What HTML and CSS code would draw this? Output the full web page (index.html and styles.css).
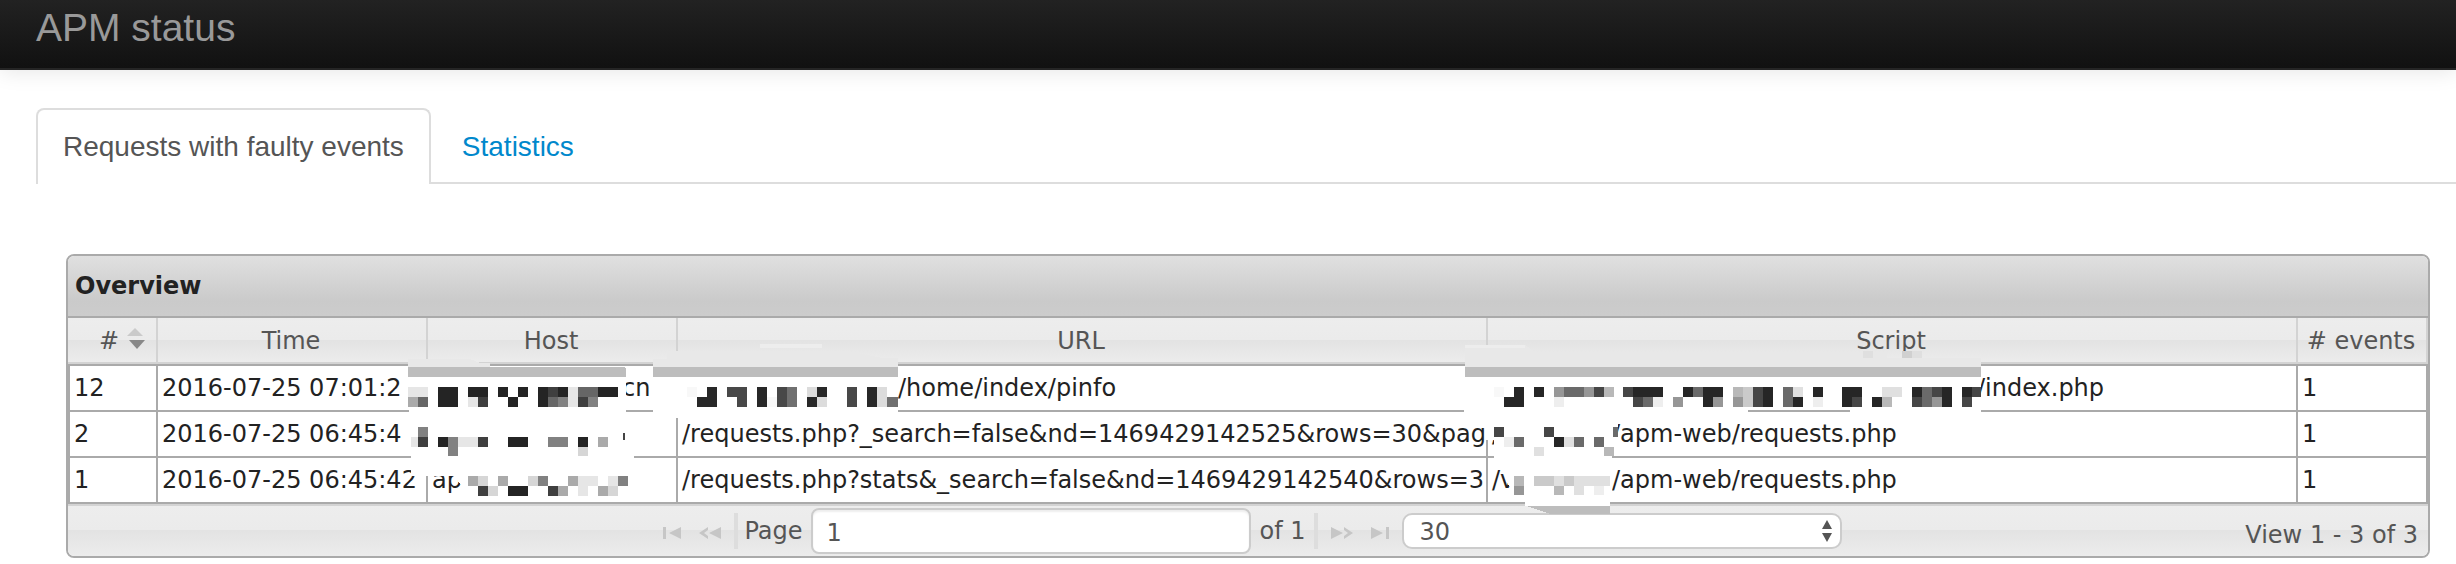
FILE: index.html
```html
<!DOCTYPE html>
<html lang="en">
<head>
<meta charset="utf-8">
<title>APM status</title>
<link rel="stylesheet" href="styles.css">
</head>
<body>
<header class="navbar"><h1 class="brand">APM status</h1></header>
<nav class="tabs">
  <a class="tab tab-active" href="#requests">Requests with faulty events</a>
  <a class="tab" href="#statistics">Statistics</a>
</nav>
<main class="grid" id="requests">
  <h2 class="grid-title">Overview</h2>
  <table class="grid-table">
    <colgroup>
      <col class="col-id"><col class="col-time"><col class="col-host"><col><col><col class="col-events">
    </colgroup>
    <thead>
      <tr>
        <th scope="col"><span class="sort">#
          <svg class="sort-icon" width="18" height="22" viewBox="0 0 18 22" aria-hidden="true"><path fill="#cacaca" d="M8 0l8 8H0z"/><path fill="#888" d="M2 12h16l-8 9z"/></svg></span></th>
        <th scope="col">Time</th>
        <th scope="col">Host</th>
        <th scope="col">URL</th>
        <th scope="col">Script</th>
        <th scope="col"># events</th>
      </tr>
    </thead>
    <tbody>
      <tr>
        <td>12</td>
        <td>2016-07-25 07:01:2</td>
        <td><span class="masked masked-host"></span>cn</td>
        <td><span class="masked masked-url"></span>/home/index/pinfo</td>
        <td><span class="masked masked-script"></span>/index.php</td>
        <td>1</td>
      </tr>
      <tr>
        <td>2</td>
        <td>2016-07-25 06:45:4</td>
        <td></td>
        <td>/requests.php?_search=false&amp;nd=1469429142525&amp;rows=30&amp;pag</td>
        <td><span class="masked masked-dir">/</span>/apm-web/requests.php</td>
        <td>1</td>
      </tr>
      <tr>
        <td>1</td>
        <td>2016-07-25 06:45:42</td>
        <td>ap</td>
        <td>/requests.php?stats&amp;_search=false&amp;nd=1469429142540&amp;rows=3</td>
        <td><span class="masked masked-dir">/v</span>/apm-web/requests.php</td>
        <td>1</td>
      </tr>
    </tbody>
  </table>
  <footer class="pager">
    <div class="pager-center">
      <button class="pager-button" type="button" aria-label="First page"><svg width="18" height="12" viewBox="0 0 18 12"><path fill="#c6c6c6" d="M0 0h3v12H0zM18 0v12L6 6z"/></svg></button>
      <button class="pager-button" type="button" aria-label="Previous page"><svg width="22" height="12" viewBox="0 0 22 12"><path fill="#c6c6c6" d="M22 0v12L10 6zM9 0v3L5 6l4 3v3L0 6z"/></svg></button>
      <span class="separator"></span>
      <label class="page-label" for="page">Page</label>
      <input class="page-input" id="page" type="text" value="1">
      <span class="page-total">of 1</span>
      <span class="separator"></span>
      <button class="pager-button" type="button" aria-label="Next page"><svg width="22" height="12" viewBox="0 0 22 12"><path fill="#c6c6c6" d="M0 0v12l12-6zM13 0v3l4 3-4 3v3l9-6z"/></svg></button>
      <button class="pager-button" type="button" aria-label="Last page"><svg width="18" height="12" viewBox="0 0 18 12"><path fill="#c6c6c6" d="M0 0v12l12-6zM15 0h3v12h-3z"/></svg></button>
      <span class="select-wrap">
        <select class="rows-select" aria-label="Rows per page"><option>30</option></select>
        <svg class="select-arrows" width="12" height="22" viewBox="0 0 12 22" aria-hidden="true"><path fill="#555" d="M6 0l5 9H1zM1 13h10l-5 9z"/></svg>
      </span>
    </div>
    <span class="pager-info">View 1 - 3 of 3</span>
  </footer>
  <svg class="mosaic" width="2364" height="304" viewBox="66 254 2364 304" shape-rendering="crispEdges" aria-hidden="true">
    <!-- smeared header strips -->
    <path fill="#e8e8e8" d="M408 359h62l10 4h10v4h-82zM667 351h180l35 7h16v9H653v-8h14zM1465 345h60l10 7h352v6h94v9h-516z"/>
    <path fill="#ededed" d="M760 344h62v4h-62zM1465 345h60v3h-60z"/>
    <path fill="#bdbdbd" d="M408 367h216l2 2v8H408zM653 367h245v10H653zM1465 367h516v10h-516z"/>
    <path fill="#d0d0d0" d="M1902 351h10v7h-10z"/><path fill="#dfdfdf" d="M1912 351h10v7h-10zM1863 351h10v7h-10z"/>
    <!-- blanked areas -->
    <path fill="#fff" d="M409 377h217v50h8v49h-16v20H470l-8-10-8-10h-43v-49h-2zM653 377h245v41H653zM1465 377h516v35h-131v-1h-102v7h-130v38h-6v46h-2v4h-85v-4l-10-7-9-14v-23h-12v-18h-9v-24h-4v-2h-17z"/>
    <path fill="#bdbdbd" d="M1527 506h83v8h-60z"/>
    <path fill="#aaa" d="M1748 410h102v2h-102z"/>
    <path fill="#444" d="M623 433h2v7h-2z"/>
    <!-- host -->
    <path fill="#e6e6e6" d="M408 387h20v10h-20zM468 397h10v10h-10zM568 387h10v20h-10zM411 437h7v10h-7zM458 437h20v10h-20zM578 476h20v10h-20zM578 486h10v10h-10zM608 476h10v10h-10z"/>
    <path fill="#aaa" d="M408 397h10v10h-10zM598 437h10v10h-10zM468 476h10v10h-10zM498 476h10v10h-10zM568 476h10v10h-10zM558 486h10v10h-10zM598 486h10v10h-10z"/>
    <path fill="#666" d="M418 397h10v10h-10zM548 397h10v10h-10zM578 387h20v10h-20z"/>
    <path fill="#242424" d="M438 387h20v20h-20zM468 387h20v10h-20zM498 387h10v10h-10zM508 397h10v10h-10zM518 387h10v10h-10zM538 387h10v20h-10zM558 387h10v10h-10zM598 387h20v10h-20zM438 437h10v10h-10zM508 437h20v10h-20zM578 437h10v10h-10zM508 486h20v10h-20z"/>
    <path fill="#3f3f3f" d="M478 397h10v10h-10zM548 387h10v10h-10zM578 397h10v10h-10zM418 437h10v10h-10zM478 437h10v10h-10zM478 486h10v10h-10zM548 486h10v10h-10z"/>
    <path fill="#818181" d="M558 397h10v10h-10zM588 397h10v10h-10zM418 427h10v10h-10zM448 437h10v19h-10zM548 437h20v10h-20zM538 476h10v10h-10zM618 476h10v10h-10z"/>
    <path fill="#d6d6d6" d="M578 447h10v9h-10zM478 476h10v10h-10zM488 486h10v10h-10zM528 476h10v10h-10zM608 486h10v10h-10z"/>
    <!-- url -->
    <path fill="#f8f8f8" d="M687 387h10v10h-10zM767 397h10v10h-10zM1494 387h10v10h-10z"/>
    <path fill="#282828" d="M707 387h10v10h-10zM697 397h20v10h-20zM757 387h10v20h-10zM807 397h10v10h-10zM817 387h10v10h-10zM867 387h10v20h-10z"/>
    <path fill="#484848" d="M727 387h20v10h-20zM737 397h10v10h-10zM777 387h10v20h-10zM847 387h10v20h-10z"/>
    <path fill="#707070" d="M787 387h10v20h-10zM887 397h11v10h-11z"/>
    <path fill="#dcdcdc" d="M807 387h10v10h-10zM817 397h10v10h-10zM877 387h10v20h-10z"/>
    <!-- script -->
    <path fill="#262626" d="M1514 387h10v20h-10zM1504 397h10v10h-10zM1534 387h10v10h-10zM1633 387h30v10h-30zM1683 387h10v10h-10zM1703 387h20v10h-20zM1703 397h10v10h-10zM1763 387h10v20h-10zM1793 397h10v10h-10zM1813 387h10v10h-10zM1842 387h20v10h-20zM1842 397h10v10h-10zM1872 397h10v10h-10zM1912 387h10v10h-10zM1942 387h10v20h-10zM1962 387h10v10h-10zM1554 437h10v10h-10z"/>
    <path fill="#464646" d="M1594 387h10v10h-10zM1623 387h10v10h-10zM1633 397h10v10h-10zM1753 387h10v20h-10zM1852 397h10v10h-10zM1912 397h10v10h-10zM1932 387h10v10h-10zM1962 397h10v10h-10zM1972 387h9v10h-9zM1494 427h10v10h-10zM1544 427h10v10h-10z"/>
    <path fill="#6a6a6a" d="M1564 387h20v10h-20zM1643 397h10v10h-10zM1693 387h10v10h-10zM1783 387h10v10h-10zM1783 397h10v10h-10zM1922 387h10v20h-10zM1613 427h5v10h-5zM1514 437h10v10h-10zM1574 437h10v10h-10zM1594 437h10v10h-10z"/>
    <path fill="#969696" d="M1554 387h10v10h-10zM1584 387h10v10h-10zM1673 397h10v10h-10zM1713 397h10v10h-10zM1733 397h10v10h-10zM1932 397h10v10h-10zM1514 486h10v9h-10z"/>
    <path fill="#b8b8b8" d="M1604 387h10v10h-10zM1733 387h10v10h-10zM1882 397h10v10h-10zM1604 447h10v9h-10zM1514 476h10v10h-10zM1554 486h10v9h-10z"/>
    <path fill="#cacaca" d="M1743 387h10v20h-10zM1534 476h20v10h-20zM1564 476h10v10h-10z"/>
    <path fill="#e0e0e0" d="M1793 387h10v10h-10zM1882 387h20v10h-20zM1564 437h10v10h-10zM1534 447h10v9h-10zM1554 476h10v10h-10zM1574 476h36v10h-36zM1574 486h10v9h-10z"/>
    <path fill="#eee" d="M1554 397h10v10h-10zM1813 397h10v10h-10zM1504 437h10v10h-10zM1594 486h10v9h-10zM1653 397h10v10h-10z"/>
  </svg>
</main>
</body>
</html>
```
FILE: styles.css
```css
* { box-sizing: border-box; }
body {
  margin: 0;
  background: #fff;
  color: #222;
  font-family: Verdana, "DejaVu Sans", sans-serif;
  font-size: 24px;
}
.navbar {
  height: 70px;
  padding: 0 36px;
  border-bottom: 2px solid #252525;
  background: linear-gradient(#222, #111);
  box-shadow: 0 2px 20px rgba(0, 0, 0, 0.1);
}
.brand {
  margin: 0;
  color: #999;
  font: 39px/56px "Helvetica Neue", "Liberation Sans", sans-serif;
}
.tabs {
  display: flex;
  gap: 4px;
  margin-top: 38px;
  padding-left: 36px;
  font: 28px/36px "Helvetica Neue", "Liberation Sans", sans-serif;
  background: linear-gradient(#ddd, #ddd) 36px 100% / 100% 2px no-repeat;
}
.tab {
  padding: 19px 25px;
  border: 2px solid transparent;
  border-bottom: 0;
  border-radius: 8px 8px 0 0;
  color: #08c;
  text-decoration: none;
}
.tab-active {
  border-color: #ddd;
  background: #fff;
  color: #555;
}
.grid {
  position: relative;
  margin: 70px 26px 6px 66px;
  border: 2px solid #aaa;
  border-radius: 8px;
}
.grid-title {
  margin: 0;
  padding: 0 7px;
  border-bottom: 2px solid #aaa;
  border-radius: 6px 6px 0 0;
  background: linear-gradient(#e0e0e0, #cacaca 75%, #ccc);
  font-size: 24px;
  line-height: 60px;
}
.grid-table {
  width: 100%;
  table-layout: fixed;
  border-spacing: 0;
}
.col-id { width: 90px; }
.col-time { width: 270px; }
.col-host { width: 250px; }
.col-events { width: 130px; }
th {
  height: 46px;
  padding: 2px 2px 0 0;
  border: solid #d3d3d3;
  border-width: 0 2px 2px 0;
  background: linear-gradient(#ededed, #ebebeb 50%, #e3e3e3 51%, #ececec);
  color: #555;
  font-weight: normal;
  line-height: 42px;
  white-space: nowrap;
}
.sort {
  display: flex;
  justify-content: center;
  align-items: center;
  gap: 8px;
  padding-left: 22px;
}
.sort-icon { margin-bottom: 4px; }
td {
  height: 46px;
  padding: 0 4px;
  border: solid #aaa;
  border-width: 0 2px 2px 0;
  line-height: 44px;
  white-space: nowrap;
  overflow: hidden;
}
td:first-child { border-left-width: 2px; }
tbody tr:first-child td { border-top-width: 2px; }
.masked { display: inline-block; }
.masked-host { width: 190px; }
.masked-url { width: 216px; }
.masked-script { width: 485px; }
.masked-dir { width: 120px; }
.pager {
  display: grid;
  grid-template-columns: 1fr auto 1fr;
  align-items: center;
  height: 52px;
  border-top: 2px solid #d3d3d3;
  border-radius: 0 0 6px 6px;
  background: linear-gradient(#ededed, #ebebeb 48%, #e3e3e3 49%, #ececec);
  color: #555;
}
.pager-center {
  grid-column: 2;
  display: flex;
  align-items: center;
}
.pager-button {
  display: flex;
  margin: 4px 9px 0;
  padding: 0;
  border: 0;
  background: none;
}
.separator {
  width: 4px;
  height: 36px;
  margin: 0 4px;
  background: #ddd;
}
.page-label { margin: 0 8px 0 2px; }
.page-input {
  width: 440px;
  height: 46px;
  padding: 4px 14px 0;
  border: 2px solid #ccc;
  border-radius: 8px;
  background: #fff;
  box-shadow: inset 0 2px 2px rgba(0, 0, 0, 0.07);
  color: #555;
  font: inherit;
}
.page-total { margin: 0 4px 0 9px; }
.select-wrap {
  position: relative;
  display: flex;
  margin-left: 4px;
}
.rows-select {
  width: 440px;
  height: 36px;
  padding: 3px 16px 0;
  border: 2px solid #ccc;
  border-radius: 10px;
  background: #fff;
  color: #555;
  font: inherit;
  line-height: 29px;
  appearance: none;
}
.select-arrows {
  position: absolute;
  top: 7px;
  right: 9px;
  pointer-events: none;
}
.pager-info {
  padding: 8px 10px 0 0;
  text-align: right;
}
.mosaic {
  position: absolute;
  top: -2px;
  left: -2px;
  pointer-events: none;
}
```
